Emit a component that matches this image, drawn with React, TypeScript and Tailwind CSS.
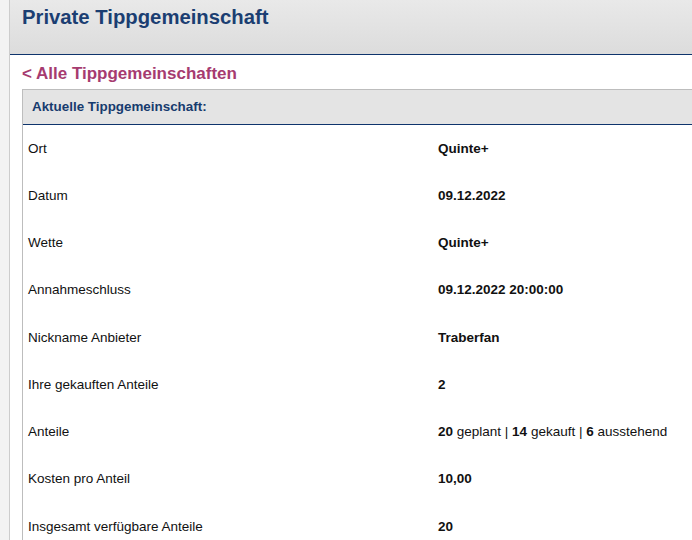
import React from "react";

const rows: { label: string; value: React.ReactNode }[] = [
  { label: "Ort", value: <b>Quinte+</b> },
  { label: "Datum", value: <b>09.12.2022</b> },
  { label: "Wette", value: <b>Quinte+</b> },
  { label: "Annahmeschluss", value: <b>09.12.2022 20:00:00</b> },
  { label: "Nickname Anbieter", value: <b>Traberfan</b> },
  { label: "Ihre gekauften Anteile", value: <b>2</b> },
  {
    label: "Anteile",
    value: (
      <span>
        <b>20</b> geplant | <b>14</b> gekauft | <b>6</b> ausstehend
      </span>
    ),
  },
  { label: "Kosten pro Anteil", value: <b>10,00</b> },
  { label: "Insgesamt verfügbare Anteile", value: <b>20</b> },
];

export default function App() {
  return (
    <div
      className="flex w-[692px] h-[540px] overflow-hidden bg-[#f3f3f3]"
      style={{ fontFamily: '"Liberation Sans", Arial, sans-serif' }}
    >
      <div className="w-[10px] shrink-0 bg-[#f3f3f3] border-r border-[#cdcdcd]" />
      <div className="flex-1 min-w-0 bg-white flex flex-col">
        <div className="h-[55px] shrink-0 bg-gradient-to-b from-[#e9e9e9] to-[#dcdcdc] border-b border-[#0e346c] px-[12px] pt-[5px]">
          <h1 className="text-[20.3px] leading-[24px] font-bold text-[#1b3e72]">
            Private Tippgemeinschaft
          </h1>
        </div>
        <div className="pl-[12px] pt-[8px]">
          <div className="text-[17px] leading-[22px] font-bold text-[#a63b70] mb-[4px]">
            &lt; Alle Tippgemeinschaften
          </div>
          <div className="border-t border-l border-[#bdbdbd]">
            <div className="h-[35px] bg-[#e4e4e4] border-b border-[#0e346c] flex items-center pl-[9px]">
              <span className="text-[13.4px] font-bold text-[#173b6e]">
                Aktuelle Tippgemeinschaft:
              </span>
            </div>
            <div className="flex flex-col">
              {rows.map((r) => (
                <div
                  key={r.label}
                  className="grid grid-cols-[410px_1fr] h-[47.25px] items-center text-[13.5px] text-[#111]"
                >
                  <div className="pl-[5px]">{r.label}</div>
                  <div className="pl-[5px]">{r.value}</div>
                </div>
              ))}
            </div>
          </div>
        </div>
      </div>
    </div>
  );
}
